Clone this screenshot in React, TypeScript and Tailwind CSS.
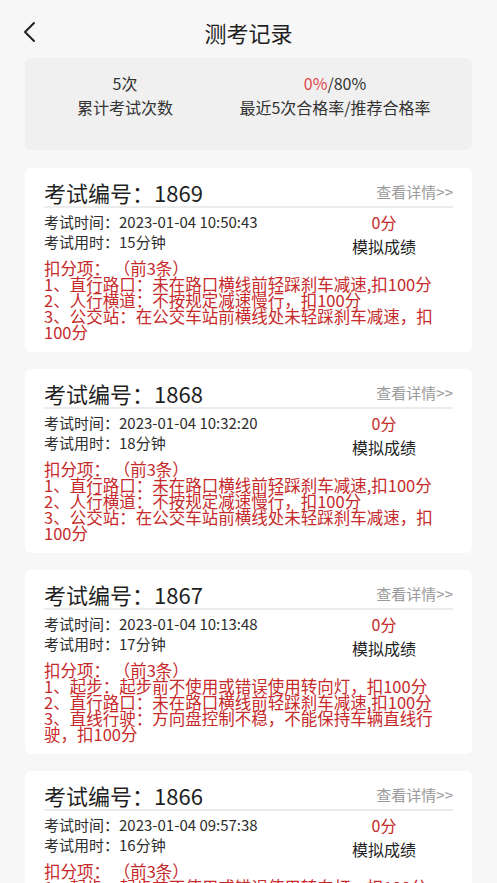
import React from "react";

type Rec = {
  no: string;
  time: string;
  dur: string;
  items: string[];
};

const records: Rec[] = [
  {
    no: "1869",
    time: "2023-01-04 10:50:43",
    dur: "15分钟",
    items: [
      "1、直行路口：未在路口横线前轻踩刹车减速,扣100分",
      "2、人行横道：不按规定减速慢行，扣100分",
      "3、公交站：在公交车站前横线处未轻踩刹车减速，扣100分",
    ],
  },
  {
    no: "1868",
    time: "2023-01-04 10:32:20",
    dur: "18分钟",
    items: [
      "1、直行路口：未在路口横线前轻踩刹车减速,扣100分",
      "2、人行横道：不按规定减速慢行，扣100分",
      "3、公交站：在公交车站前横线处未轻踩刹车减速，扣100分",
    ],
  },
  {
    no: "1867",
    time: "2023-01-04 10:13:48",
    dur: "17分钟",
    items: [
      "1、起步：起步前不使用或错误使用转向灯，扣100分",
      "2、直行路口：未在路口横线前轻踩刹车减速,扣100分",
      "3、直线行驶：方向盘控制不稳，不能保持车辆直线行驶，扣100分",
    ],
  },
  {
    no: "1866",
    time: "2023-01-04 09:57:38",
    dur: "16分钟",
    items: [
      "1、起步：起步前不使用或错误使用转向灯，扣100分",
      "2、直行路口：未在路口横线前轻踩刹车减速,扣100分",
      "3、人行横道：不按规定减速慢行，扣100分",
    ],
  },
];

function Card({ r }: { r: Rec }) {
  return (
    <div className="mx-[25px] mb-[17px] rounded-[6px] bg-white px-[19px] pt-[11px] pb-[12px]">
      <div className="flex items-center justify-between">
        <div className="text-[22px] leading-[26px] text-[#1f1f1f]">
          考试编号：<span>{r.no}</span>
        </div>
        <div className="text-[15px] leading-[26px] text-[#9a9a9a]">查看详情&gt;&gt;</div>
      </div>
      <div className="mt-[1px] h-[2px] bg-[#ececec]" />
      <div className="mt-[4px] flex h-[40px] items-start">
        <div className="flex-1 text-[15px] leading-[20px] text-[#2e2e2e]">
          <div>考试时间：{r.time}</div>
          <div>考试用时：{r.dur}</div>
        </div>
        <div className="mr-[29px] flex w-[80px] flex-col items-center">
          <div className="text-[16px] leading-[20px] text-[#c62a2a]">0分</div>
          <div className="text-[16px] leading-[28px] text-[#1f1f1f]">模拟成绩</div>
        </div>
      </div>
      <div className="mt-[8px] w-[395px] text-[16.5px] leading-[16px] text-[#c62a2a]">
        <div>扣分项：&nbsp;（前3条）</div>
        {r.items.map((t, i) => (
          <div key={i}>{t}</div>
        ))}
      </div>
    </div>
  );
}

export default function App() {
  return (
    <div
      className="min-h-[883px] w-full overflow-hidden bg-[#f7f7f7]"
      style={{ fontFamily: '"Noto Sans CJK SC", "Noto Sans", sans-serif' }}
    >
      <div className="grid h-[58px] grid-cols-[60px_1fr_60px] items-center">
        <div className="flex items-center pl-[20px] pt-[6px]">
          <svg width="18" height="24" viewBox="0 0 18 24" fill="none">
            <path d="M14 3 L5 12 L14 21" stroke="#222222" strokeWidth="2" strokeLinecap="round" strokeLinejoin="round" />
          </svg>
        </div>
        <div className="pt-[6px] text-center text-[22px] leading-[28px] text-[#1f1f1f]">测考记录</div>
        <div />
      </div>
      <div className="mx-[25px] h-[92px] rounded-[6px] bg-[#f0f0f0] pt-[13px]">
        <div className="flex text-[16px] leading-[24px] text-[#333333]">
          <div className="flex w-[200px] flex-col items-center">
            <div>5次</div>
            <div>累计考试次数</div>
          </div>
          <div className="flex w-[220px] flex-col items-center">
            <div>
              <span className="text-[#e0474c]">0%</span>/80%
            </div>
            <div>最近5次合格率/推荐合格率</div>
          </div>
        </div>
      </div>
      <div className="h-[18px]" />
      {records.map((r) => (
        <Card key={r.no} r={r} />
      ))}
    </div>
  );
}
